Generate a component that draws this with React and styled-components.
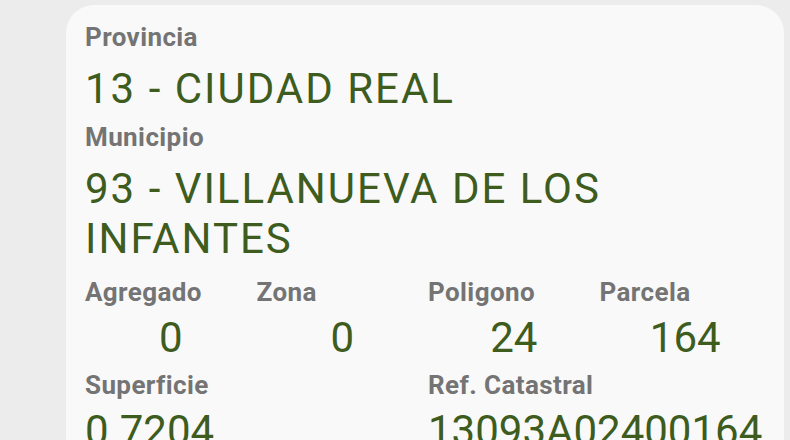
import { createGlobalStyle, styled } from 'styled-components';

const GlobalStyle = createGlobalStyle`
  html, body {
    margin: 0;
    padding: 0;
    background-color: #ececec;
    font-family: Roboto, "Liberation Sans", sans-serif;
  }
`;

const Card = styled.section`
  margin: 5px 6px 0 66px;
  padding: 17px 13px 0 19px;
  background-color: #f9f9f9;
  border-radius: 28px 28px 0 0;
  height: 435px;
  box-sizing: border-box;
  overflow: hidden;
`;

const Field = styled.div`
  display: flex;
  flex-direction: column;
  gap: ${props => props.$gap || 12}px;
  margin-bottom: ${props => props.$after || 8}px;
`;

const Label = styled.span`
  font-size: 26px;
  line-height: 30px;
  font-weight: 700;
  letter-spacing: 0.4px;
  color: #747474;
  white-space: nowrap;
`;

const Value = styled.span`
  font-size: 42px;
  line-height: 50px;
  color: #3d5c1e;
  white-space: nowrap;
  letter-spacing: ${props => props.$wide ? '2px' : '0'};
  text-align: ${props => props.$center ? 'center' : 'left'};
`;

const Row = styled.div`
  display: grid;
  grid-template-columns: repeat(${props => props.$cols}, 1fr);
`;

function Info() {
  return (
    <Card>
      <Field>
        <Label>Provincia</Label>
        <Value $wide>13 - CIUDAD REAL</Value>
      </Field>

      <Field $after={13}>
        <Label>Municipio</Label>
        <Value $wide>93 - VILLANUEVA DE LOS<br />INFANTES</Value>
      </Field>

      <Row $cols={4}>
        <Field $gap={6} $after={7}>
          <Label>Agregado</Label>
          <Value $center>0</Value>
        </Field>
        <Field $gap={6} $after={7}>
          <Label>Zona</Label>
          <Value $center>0</Value>
        </Field>
        <Field $gap={6} $after={7}>
          <Label>Poligono</Label>
          <Value $center>24</Value>
        </Field>
        <Field $gap={6} $after={7}>
          <Label>Parcela</Label>
          <Value $center>164</Value>
        </Field>
      </Row>

      <Row $cols={2}>
        <Field $gap={6}>
          <Label>Superficie</Label>
          <Value>0.7204</Value>
        </Field>
        <Field $gap={6}>
          <Label>Ref. Catastral</Label>
          <Value>13093A02400164</Value>
        </Field>
      </Row>
    </Card>
  );
}

export default function App() {
  return (
    <>
      <GlobalStyle />
      <Info />
    </>
  );
}
